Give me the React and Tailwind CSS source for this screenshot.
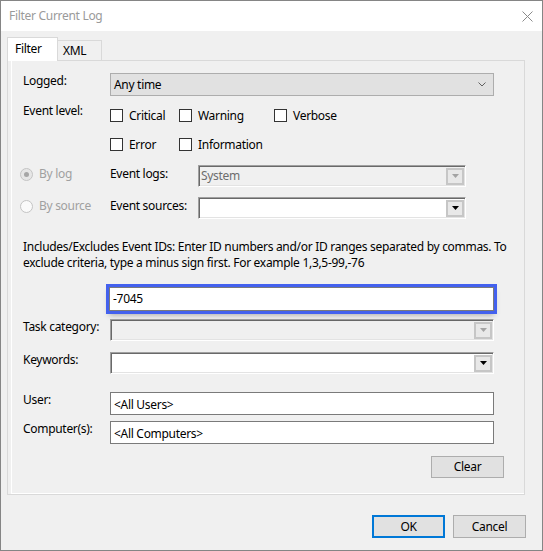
import React from 'react'

function Arrow({ disabled }) {
  return (
    <svg width="7" height="4" viewBox="0 0 7 4">
      <path d="M0 0 H7 L3.5 4 Z" fill={disabled ? '#a3a3a3' : '#000'} />
    </svg>
  )
}

function Combo({ value, disabled, className }) {
  return (
    <div
      className={[
        'flex h-[22px] items-center border border-t-[#a0a0a0] border-l-[#a0a0a0] border-b-white border-r-white shadow-[inset_1px_1px_0_#696969,inset_-1px_-1px_0_#e3e3e3]',
        disabled ? 'bg-[#f0f0f0] text-[#6d6d6d]' : 'bg-white',
        className,
      ].join(' ')}
    >
      <div className="flex-1 pl-[2px] leading-[16px]">{value}</div>
      <div className="mr-[1px] flex h-[17px] w-[18px] items-center justify-center border-2 border-[#c6c6c6] bg-[#e8e8e8]">
        <Arrow disabled={disabled} />
      </div>
    </div>
  )
}

function Check({ label, className }) {
  return (
    <div className={['flex h-[13px] items-center', className].join(' ')}>
      <span className="h-[13px] w-[13px] shrink-0 border border-[#333] bg-white" />
      <span className="ml-[6px] whitespace-nowrap leading-[16px]">{label}</span>
    </div>
  )
}

function Radio({ label, checked }) {
  return (
    <div className="flex w-[90px] items-center pt-[1px] text-[#a0a0a0]">
      <span
        className={[
          'flex h-[13px] w-[13px] shrink-0 items-center justify-center rounded-full border border-[#c4c4c4]',
          checked ? 'bg-[#e6e6e6]' : 'bg-[#fafafa]',
        ].join(' ')}
      >
        {checked && <span className="h-[5px] w-[5px] rounded-full bg-[#a6a6a6]" />}
      </span>
      <span className="ml-[6px] whitespace-nowrap leading-[16px]">{label}</span>
    </div>
  )
}

function Label({ children }) {
  return <div className="w-[87px] shrink-0 whitespace-nowrap leading-[16px]">{children}</div>
}

function Button({ children, primary, className }) {
  return (
    <div
      className={[
        'flex w-[73px] items-center justify-center bg-[#e1e1e1] leading-[16px]',
        primary ? 'border-2 border-[#0078d7]' : 'border border-[#adadad]',
        className,
      ].join(' ')}
    >
      {children}
    </div>
  )
}

export default function App() {
  return (
    <div className="flex h-[551px] w-[543px] flex-col border border-[#858585] bg-[#f0f0f0] font-['Noto_Sans',Arial,sans-serif] text-[12px] tracking-[-0.3px] text-black">
      {/* title bar */}
      <div className="flex h-[30px] shrink-0 items-center justify-between bg-white pl-[8px] pr-[9px]">
        <span className="leading-[16px] text-[#9a9a9a]">Filter Current Log</span>
        <svg width="11" height="11" viewBox="0 0 11 11">
          <path d="M0.5 0.5 L10.5 10.5 M10.5 0.5 L0.5 10.5" stroke="#8a8a8a" strokeWidth="1" />
        </svg>
      </div>

      <div className="pl-[6px] pr-[16px] pt-[6px]">
        {/* tabs */}
        <div className="flex h-[23px] items-end">
          <div className="relative z-10 -mb-px flex h-[24px] w-[51px] items-start border-x border-t border-[#d9d9d9] bg-white pl-[7px] pt-[3px] leading-[16px]">
            Filter
          </div>
          <div className="flex h-[20px] w-[44px] items-start border-r border-t border-[#d9d9d9] pl-[5px] pt-[2px] leading-[16px]">
            XML
          </div>
        </div>

        {/* panel */}
        <div className="h-[435px] w-[518px] border border-[#d9d9d9] pl-[3px]">
          <div className="h-full border-b border-l border-white">
            <div className="flex flex-col">
              {/* logged */}
              <div className="mt-[12px] flex pl-[11px]">
                <Label>Logged:</Label>
                <div className="flex h-[23px] w-[384px] items-center justify-between border border-[#adadad] bg-[#e1e1e1] pl-[3px] pr-[7px]">
                  <span className="leading-[16px]">Any time</span>
                  <svg width="8" height="5" viewBox="0 0 8 5">
                    <path d="M0.5 0.5 L4 4 L7.5 0.5" fill="none" stroke="#606060" strokeWidth="1" />
                  </svg>
                </div>
              </div>

              {/* event level */}
              <div className="mt-[7px] flex pl-[11px]">
                <Label>Event level:</Label>
                <div className="flex flex-col gap-[16px] pt-[6px]">
                  <div className="flex">
                    <Check label="Critical" className="w-[69px]" />
                    <Check label="Warning" className="w-[95px]" />
                    <Check label="Verbose" />
                  </div>
                  <div className="flex">
                    <Check label="Error" className="w-[69px]" />
                    <Check label="Information" />
                  </div>
                </div>
              </div>

              {/* by log */}
              <div className="mt-[14px] flex items-start pl-[8px]">
                <Radio label="By log" checked />
                <div className="w-[88px] shrink-0 whitespace-nowrap pt-[1px] leading-[16px]">Event logs:</div>
                <Combo value="System" disabled className="w-[268px]" />
              </div>

              {/* by source */}
              <div className="mt-[10px] flex items-start pl-[8px]">
                <Radio label="By source" />
                <div className="w-[88px] shrink-0 whitespace-nowrap pt-[1px] leading-[16px]">Event sources:</div>
                <Combo value="" className="w-[268px]" />
              </div>

              {/* description */}
              <div className="mt-[20px] whitespace-nowrap pl-[11px] leading-[16px]">
                <div>Includes/Excludes Event IDs: Enter ID numbers and/or ID ranges separated by commas. To</div>
                <div>exclude criteria, type a minus sign first. For example 1,3,5-99,-76</div>
              </div>

              {/* event id */}
              <div className="mt-[16px] flex pl-[97px]">
                <div className="relative z-10 flex h-[24px] w-[385px] items-center border border-[#7a7a7a] bg-white pl-[3px] shadow-[0_0_0_3px_#4361ee,0_4px_6px_rgba(0,0,0,0.3)]">
                  <span className="leading-[16px]">-7045</span>
                </div>
              </div>

              {/* task category */}
              <div className="mt-[8px] flex pl-[11px]">
                <Label>Task category:</Label>
                <Combo value="" disabled className="w-[384px]" />
              </div>

              {/* keywords */}
              <div className="mt-[11px] flex pl-[11px]">
                <Label>Keywords:</Label>
                <Combo value="" className="w-[384px]" />
              </div>

              {/* user */}
              <div className="mt-[18px] flex pl-[11px]">
                <Label>User:</Label>
                <div className="flex h-[23px] w-[384px] items-center border border-[#7a7a7a] bg-white pl-[3px] pt-[2px]">
                  <span className="leading-[16px]">&lt;All Users&gt;</span>
                </div>
              </div>

              {/* computers */}
              <div className="mt-[6px] flex pl-[11px]">
                <Label>Computer(s):</Label>
                <div className="flex h-[23px] w-[384px] items-center border border-[#7a7a7a] bg-white pl-[3px] pt-[2px]">
                  <span className="leading-[16px]">&lt;All Computers&gt;</span>
                </div>
              </div>

              {/* clear */}
              <div className="mt-[12px] flex pl-[419px]">
                <Button className="h-[22px]">Clear</Button>
              </div>
            </div>
          </div>
        </div>
      </div>

      {/* footer buttons */}
      <div className="mt-[20px] flex justify-end gap-[8px] pr-[16px]">
        <Button primary className="h-[23px]">OK</Button>
        <Button className="h-[23px]">Cancel</Button>
      </div>
    </div>
  )
}
